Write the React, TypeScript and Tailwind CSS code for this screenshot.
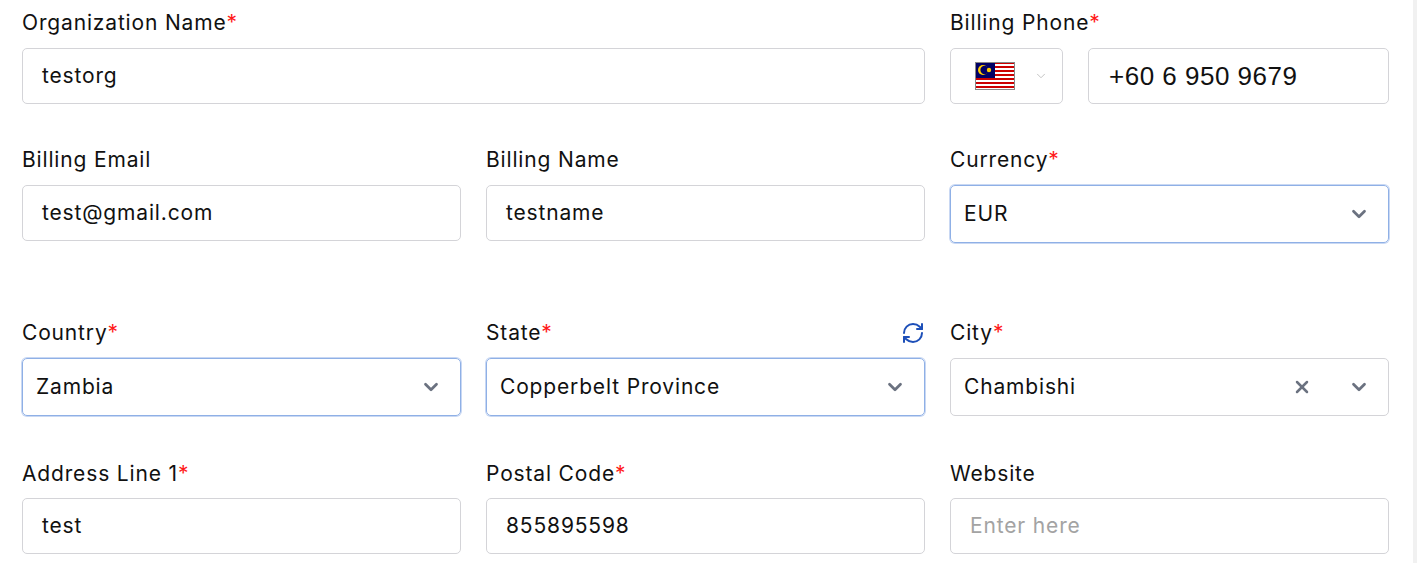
import { RefreshCw, ChevronDown, X } from "lucide-react";

function Label({ text, req }: { text: string; req?: boolean }) {
  return (
    <div className="h-[24px] text-[21px] leading-[24px] tracking-[0.04em] text-[#111]">
      {text}
      {req && <span className="text-[#ff1a1a]">*</span>}
    </div>
  );
}

function TextBox({ value, placeholder }: { value?: string; placeholder?: string }) {
  return (
    <div className="flex h-[56px] items-center rounded-[5px] border border-[#d4d4d8] px-[19px] text-[21px] tracking-[0.04em]">
      {value ? <span className="text-[#111]">{value}</span> : <span className="text-[#a3a3a3]">{placeholder}</span>}
    </div>
  );
}

function SelectBox({ value, focused, clear }: { value: string; focused?: boolean; clear?: boolean }) {
  return (
    <div
      className={
        "flex h-[58px] items-center rounded-[5px] border pl-[13px] pr-[18px] text-[21px] tracking-[0.04em] text-[#111] " +
        (focused ? "border-[#8fb0e6] shadow-[0_0_0_1px_#c9d8f3]" : "border-[#d4d4d8]")
      }
    >
      <span className="flex-1">{value}</span>
      {clear && <X className="mr-[36px] size-[20px] text-[#6b7280]" strokeWidth={3} />}
      <ChevronDown className="size-[22px] text-[#6b7280]" strokeWidth={3} />
    </div>
  );
}

function Flag() {
  return (
    <svg width="40" height="28" viewBox="0 0 40 28">
      <rect width="40" height="28" fill="#fff" />
      {[0, 1, 2, 3, 4, 5, 6].map((i) => (
        <rect key={i} y={i * 4} width="40" height="2" fill="#cc0001" />
      ))}
      <rect width="20" height="16" fill="#010066" />
      <circle cx="8" cy="8" r="5" fill="#fc0" />
      <circle cx="9.6" cy="8" r="4.2" fill="#010066" />
      <circle cx="14" cy="8" r="2.2" fill="#fc0" />
      <rect x="0.5" y="0.5" width="39" height="27" fill="none" stroke="#888" />
    </svg>
  );
}

export default function App() {
  return (
    <div
      className="flex h-[563px] w-[1417px] overflow-hidden bg-white"
      style={{ fontFamily: "Inter, 'Noto Sans', sans-serif" }}
    >
      <div className="flex-1 pl-[22px] pr-[24px] pt-[11px]">
        <div className="grid grid-cols-3 gap-x-[25px]">
          <div className="col-span-2">
            <Label text="Organization Name" req />
            <div className="mt-[13px]">
              <TextBox value="testorg" />
            </div>
          </div>
          <div>
            <Label text="Billing Phone" req />
            <div className="mt-[13px] flex gap-[25px]">
              <div className="flex h-[56px] w-[113px] items-center rounded-[5px] border border-[#d4d4d8] pl-[24px]">
                <Flag />
                <ChevronDown className="ml-[19px] size-[14px] text-[#bbb]" strokeWidth={1.5} />
              </div>
              <div
                className="flex h-[56px] flex-1 items-center rounded-[5px] border border-[#d4d4d8] px-[20px] text-[26px] tracking-[0.5px] text-[#111]"
                style={{ fontFamily: "'Liberation Sans', Arial, sans-serif" }}
              >
                +60 6 950 9679
              </div>
            </div>
          </div>
        </div>

        <div className="mt-[44px] grid grid-cols-3 gap-x-[25px]">
          <div>
            <Label text="Billing Email" />
            <div className="mt-[13px]">
              <TextBox value="test@gmail.com" />
            </div>
          </div>
          <div>
            <Label text="Billing Name" />
            <div className="mt-[13px]">
              <TextBox value="testname" />
            </div>
          </div>
          <div>
            <Label text="Currency" req />
            <div className="mt-[13px]">
              <SelectBox value="EUR" focused />
            </div>
          </div>
        </div>

        <div className="mt-[78px] grid grid-cols-3 gap-x-[25px]">
          <div>
            <Label text="Country" req />
            <div className="mt-[13px]">
              <SelectBox value="Zambia" focused />
            </div>
          </div>
          <div>
            <div className="flex items-center justify-between">
              <Label text="State" req />
              <RefreshCw className="size-[24px] text-[#1d4fb8]" strokeWidth={2} />
            </div>
            <div className="mt-[13px]">
              <SelectBox value="Copperbelt Province" focused />
            </div>
          </div>
          <div>
            <Label text="City" req />
            <div className="mt-[13px]">
              <SelectBox value="Chambishi" clear />
            </div>
          </div>
        </div>

        <div className="mt-[46px] grid grid-cols-3 gap-x-[25px]">
          <div>
            <Label text="Address Line 1" req />
            <div className="mt-[12px]">
              <TextBox value="test" />
            </div>
          </div>
          <div>
            <Label text="Postal Code" req />
            <div className="mt-[12px]">
              <TextBox value="855895598" />
            </div>
          </div>
          <div>
            <Label text="Website" />
            <div className="mt-[12px]">
              <TextBox placeholder="Enter here" />
            </div>
          </div>
        </div>
      </div>
      <div className="w-[4px] bg-[#f1f1f1]" />
    </div>
  );
}
